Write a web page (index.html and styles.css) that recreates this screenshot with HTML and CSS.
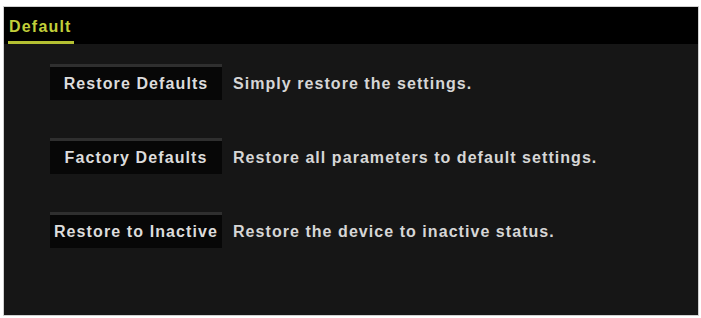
FILE: index.html
```html
<!DOCTYPE html>
<html>
<head>
<meta charset="utf-8">
<link rel="stylesheet" href="styles.css">
</head>
<body>
<div class="panel">
  <div class="header">
    <span class="tab">Default</span>
  </div>
  <div class="body">
    <div class="row">
      <div class="btn">Restore Defaults</div>
      <div class="desc">Simply restore the settings.</div>
    </div>
    <div class="row">
      <div class="btn">Factory Defaults</div>
      <div class="desc">Restore all parameters to default settings.</div>
    </div>
    <div class="row">
      <div class="btn">Restore to Inactive</div>
      <div class="desc">Restore the device to inactive status.</div>
    </div>
  </div>
</div>
</body>
</html>
```
FILE: styles.css
```css
html, body {
  margin: 0;
  padding: 0;
  background: #ffffff;
}
body {
  padding: 7px 3px 3px 4px;
  font-family: "Liberation Sans", Arial, sans-serif;
}
.panel {
  width: 694px;
  height: 308px;
  background: #161616;
  display: flex;
  flex-direction: column;
  box-shadow: 0 0 0 1px #d0d0d0;
}
.header {
  height: 37px;
  background: #000;
  display: flex;
  align-items: flex-end;
  padding-left: 4px;
}
.tab {
  color: #c2cf3a;
  font-size: 16px;
  font-weight: bold;
  letter-spacing: 1.2px;
  padding: 0 2px 5px 1px;
  border-bottom: 3px solid #b4c032;
  margin-bottom: 0;
}
.body {
  display: flex;
  flex-direction: column;
  gap: 38px;
  padding: 20px 0 0 46px;
}
.row {
  display: flex;
  align-items: center;
  gap: 11px;
}
.btn {
  width: 172px;
  height: 33px;
  box-sizing: content-box;
  background: #070707;
  border-top: 3px solid #2f2f2f;
  display: flex;
  align-items: center;
  justify-content: center;
  color: #dcdcdc;
  font-size: 16px;
  font-weight: bold;
  letter-spacing: 1.1px;
  white-space: nowrap;
}
.desc {
  color: #d6d6d6;
  font-size: 16px;
  font-weight: bold;
  letter-spacing: 1.05px;
  white-space: nowrap;
  padding-top: 3px;
}
```
